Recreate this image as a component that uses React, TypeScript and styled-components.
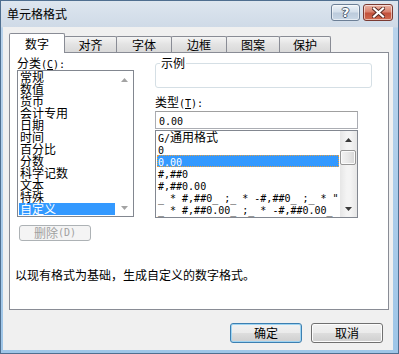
import React from "react";
import styled, { createGlobalStyle } from "styled-components";

const CJK = `"Noto Sans CJK SC", "Noto Sans", sans-serif`;
const MONO = `"DejaVu Sans Mono", "Liberation Mono", monospace`;

const GlobalStyle = createGlobalStyle`
  html, body { margin: 0; padding: 0; }
  body { width: 399px; height: 354px; overflow: hidden; background: #ffffff; }
`;

const Window = styled.div`
  width: 399px;
  height: 354px;
  box-sizing: border-box;
  display: flex;
  flex-direction: column;
  border: 1px solid #4f6f90;
  background: linear-gradient(#dde6ef 0px, #cfdae7 26px, #b9d3ec 27px, #9fc6e8 100%);
  font-family: ${CJK};
  font-size: 12px;
  line-height: 12px;
  color: #000;
`;

const TitleBar = styled.div`
  height: 26px;
  flex: none;
  display: flex;
  align-items: flex-start;
  padding: 0 5px 0 6px;
  box-sizing: border-box;
`;

const TitleText = styled.div`
  margin-top: 7px;
  flex: 1;
`;

const CaptionButton = styled.div<{ $close?: boolean }>`
  margin-top: 3px;
  width: ${(p) => (p.$close ? 30 : 29)}px;
  height: 17px;
  box-sizing: border-box;
  border: 1px solid ${(p) => (p.$close ? "#7a3a32" : "#6c7f96")};
  border-radius: 3px;
  margin-left: ${(p) => (p.$close ? 3 : 0)}px;
  display: flex;
  align-items: center;
  justify-content: center;
  background: ${(p) =>
    p.$close
      ? "linear-gradient(#eab4a6 0%, #d9826e 45%, #c3513b 55%, #cf6a4f 100%)"
      : "linear-gradient(#eef3f8 0%, #d4dfeb 45%, #bccbdc 55%, #c9d7e6 100%)"};
  box-shadow: inset 0 0 0 1px rgba(255, 255, 255, 0.55);
`;

const HelpGlyph = styled.span`
  font-family: "DejaVu Sans", sans-serif;
  font-weight: bold;
  font-size: 13px;
  line-height: 13px;
  color: #ffffff;
  text-shadow: 1px 0 0 #4a5a6e, -1px 0 0 #4a5a6e, 0 1px 0 #4a5a6e, 0 -1px 0 #4a5a6e;
`;

const Client = styled.div`
  flex: 1;
  margin: 0 5px 3px 2px;
  background: #f0f0f0;
  display: flex;
  flex-direction: column;
  padding: 6px 0 0 6px;
  box-sizing: border-box;
`;

const TabRow = styled.div`
  display: flex;
  align-items: flex-end;
  height: 20px;
  position: relative;
  z-index: 1;
`;

const Tab = styled.div<{ $w: number; $active?: boolean }>`
  width: ${(p) => p.$w}px;
  height: ${(p) => (p.$active ? 20 : 16)}px;
  margin-bottom: ${(p) => (p.$active ? 0 : 1)}px;
  box-sizing: border-box;
  border: 1px solid #898c95;
  border-bottom: none;
  margin-left: -1px;
  &:first-child { margin-left: 0; }
  border-radius: 2px 2px 0 0;
  background: ${(p) => (p.$active ? "#ffffff" : "linear-gradient(#f4f4f4, #e3e3e3 50%, #d9d9d9)")};
  display: flex;
  align-items: center;
  justify-content: center;
  padding-top: ${(p) => (p.$active ? 0 : 1)}px;
`;

const Panel = styled.div`
  width: 380px;
  height: 258px;
  margin-top: -1px;
  box-sizing: border-box;
  border: 1px solid #898c95;
  background: #ffffff;
  padding: 4px 0 0 5px;
  display: flex;
  flex-direction: column;
`;

const Columns = styled.div`
  display: grid;
  grid-template-columns: 117px 203px 14px;
  column-gap: 21px;
  margin-left: 2px;
  align-items: start;
`;

const LeftCol = styled.div`
  display: flex;
  flex-direction: column;
`;

const RightCol = styled.div`
  display: flex;
  flex-direction: column;
  grid-column: 2 / span 2;
`;

const FieldLabel = styled.div<{ $h?: number; $mt?: number }>`
  height: ${(p) => p.$h ?? 12}px;
  margin-top: ${(p) => p.$mt ?? 0}px;
  line-height: 12px;
  white-space: pre;
`;

const Mono = styled.span`
  font-family: ${MONO};
  font-size: 10px;
`;

const ListBox = styled.div<{ $h: number }>`
  height: ${(p) => p.$h}px;
  box-sizing: border-box;
  border: 1px solid #828790;
  display: flex;
  background: #ffffff;
`;

const Items = styled.div`
  flex: 1;
  min-width: 0;
  padding: 0 1px;
  overflow: hidden;
`;

const Item = styled.div<{ $selected?: boolean }>`
  height: 12px;
  line-height: 12px;
  padding-left: 1px;
  white-space: pre;
  box-sizing: border-box;
  background: ${(p) => (p.$selected ? "#3399ff" : "transparent")};
  color: ${(p) => (p.$selected ? "#ffffff" : "#000000")};
`;

const FocusItem = styled(Item)`
  outline: 1px dotted #e8a040;
  outline-offset: -1px;
`;

const ScrollBar = styled.div<{ $track?: boolean }>`
  width: 17px;
  flex: none;
  display: flex;
  flex-direction: column;
  background: ${(p) => (p.$track ? "linear-gradient(90deg, #e6e6e6, #f4f4f4 40%, #f4f4f4 60%, #e6e6e6)" : "#ffffff")};
`;

const ArrowCell = styled.div`
  height: 17px;
  flex: none;
  display: flex;
  align-items: center;
  justify-content: center;
`;

const Thumb = styled.div`
  height: 15px;
  margin: 2px 1px 0 0;
  box-sizing: border-box;
  border: 1px solid #979797;
  border-radius: 2px;
  background: linear-gradient(90deg, #f3f3f3, #e8e8e8 50%, #d6d6d6);
  box-shadow: inset 0 0 0 1px #fbfbfb;
`;

const Spacer = styled.div`
  flex: 1;
`;

const SmallButton = styled.div`
  margin-top: 8px;
  margin-left: 2px;
  width: 72px;
  height: 16px;
  box-sizing: border-box;
  border: 1px solid #adb2b5;
  border-radius: 3px;
  background: #f4f4f4;
  color: #a0a0a0;
  display: flex;
  align-items: center;
  justify-content: center;
  line-height: 12px;
`;

const GroupBox = styled.div`
  position: relative;
  margin-top: 6px;
  height: 25px;
  width: 217px;
  box-sizing: border-box;
  border: 1px solid #d5dfe5;
  border-radius: 3px;
`;

const Legend = styled.span`
  position: absolute;
  left: 4px;
  top: -7px;
  padding: 0 1px;
  background: #ffffff;
  line-height: 12px;
`;

const TextBox = styled.div`
  margin-top: 3px;
  height: 18px;
  width: 203px;
  box-sizing: border-box;
  border: 1px solid #abadb3;
  border-top-color: #a0a0a0;
  padding: 2px 0 0 3px;
  line-height: 12px;
`;

const TypeListWrap = styled.div`
  margin-top: 1px;
  width: 203px;
`;

const Description = styled.div`
  margin-top: 28px;
  line-height: 12px;
`;

const ButtonRow = styled.div`
  display: flex;
  justify-content: flex-end;
  gap: 9px;
  margin-top: 13px;
  padding-right: 10px;
`;

const DialogButton = styled.div<{ $default?: boolean }>`
  width: 72px;
  height: 20px;
  box-sizing: border-box;
  border: 1px solid ${(p) => (p.$default ? "#3c7fb1" : "#707070")};
  border-radius: 3px;
  background: linear-gradient(#f2f2f2 0%, #ebebeb 48%, #dddddd 52%, #cfcfcf 100%);
  box-shadow: inset 0 0 0 1px ${(p) => (p.$default ? "#9ed4f2" : "#fcfcfc")};
  display: flex;
  align-items: center;
  justify-content: center;
  line-height: 12px;
`;

function Arrow({ down, dim }: { down?: boolean; dim?: boolean }) {
  const c = dim ? "#a3a3a3" : "#3a3a3a";
  return (
    <svg width="7" height="4" viewBox="0 0 7 4">
      <polygon points={down ? "0,0 7,0 3.5,4" : "3.5,0 7,4 0,4"} fill={c} />
    </svg>
  );
}

function CloseGlyph() {
  return (
    <svg width="13" height="11" viewBox="0 0 13 11">
      <path d="M2 1.5 L11 9.5 M11 1.5 L2 9.5" stroke="#5a2a22" strokeWidth="4" strokeLinecap="square" />
      <path d="M2 1.5 L11 9.5 M11 1.5 L2 9.5" stroke="#ffffff" strokeWidth="2.2" strokeLinecap="square" />
    </svg>
  );
}

function Mixed({ text }: { text: string }) {
  const parts = text.split(/([\x20-\x7e]+)/).filter((s) => s.length > 0);
  return (
    <>
      {parts.map((p, i) =>
        /^[\x20-\x7e]+$/.test(p) ? <Mono key={i}>{p}</Mono> : <React.Fragment key={i}>{p}</React.Fragment>
      )}
    </>
  );
}

const tabs = [
  { label: "数字", w: 56, active: true },
  { label: "对齐", w: 53 },
  { label: "字体", w: 56 },
  { label: "边框", w: 56 },
  { label: "图案", w: 54 },
  { label: "保护", w: 52 },
];

const categories = ["常规", "数值", "货币", "会计专用", "日期", "时间", "百分比", "分数", "科学记数", "文本", "特殊", "自定义"];

const types = [
  "G/通用格式",
  "0",
  "0.00",
  "#,##0",
  "#,##0.00",
  '_ * #,##0_ ;_ * -#,##0_ ;_ * "',
  "_ * #,##0.00_ ;_ * -#,##0.00_",
];

export default function App() {
  return (
    <>
      <GlobalStyle />
      <Window>
        <TitleBar>
          <TitleText>单元格格式</TitleText>
          <CaptionButton>
            <HelpGlyph>?</HelpGlyph>
          </CaptionButton>
          <CaptionButton $close>
            <CloseGlyph />
          </CaptionButton>
        </TitleBar>
        <Client>
          <TabRow>
            {tabs.map((t) => (
              <Tab key={t.label} $w={t.w} $active={t.active}>
                {t.label}
              </Tab>
            ))}
          </TabRow>
          <Panel>
            <Columns>
              <LeftCol>
                <FieldLabel $h={13}>
                  分类<Mono>(<u>C</u>):</Mono>
                </FieldLabel>
                <ListBox $h={147}>
                  <Items>
                    {categories.map((c, i) => (
                      <Item key={c} $selected={i === categories.length - 1}>
                        {c}
                      </Item>
                    ))}
                  </Items>
                  <ScrollBar>
                    <ArrowCell>
                      <Arrow dim />
                    </ArrowCell>
                    <Spacer />
                    <ArrowCell>
                      <Arrow down dim />
                    </ArrowCell>
                  </ScrollBar>
                </ListBox>
                <SmallButton>
                  删除<Mono>(D)</Mono>
                </SmallButton>
              </LeftCol>
              <RightCol>
                <GroupBox>
                  <Legend>示例</Legend>
                </GroupBox>
                <FieldLabel $mt={8}>
                  类型<Mono>(<u>T</u>):</Mono>
                </FieldLabel>
                <TextBox>
                  <Mono>0.00</Mono>
                </TextBox>
                <TypeListWrap>
                  <ListBox $h={88}>
                    <Items>
                      {types.map((t, i) =>
                        i === 2 ? (
                          <FocusItem key={t} $selected>
                            <Mixed text={t} />
                          </FocusItem>
                        ) : (
                          <Item key={t}>
                            <Mixed text={t} />
                          </Item>
                        )
                      )}
                    </Items>
                    <ScrollBar $track>
                      <ArrowCell>
                        <Arrow />
                      </ArrowCell>
                      <Thumb />
                      <Spacer />
                      <ArrowCell>
                        <Arrow down />
                      </ArrowCell>
                    </ScrollBar>
                  </ListBox>
                </TypeListWrap>
              </RightCol>
            </Columns>
            <Description>以现有格式为基础，生成自定义的数字格式。</Description>
          </Panel>
          <ButtonRow>
            <DialogButton $default>确定</DialogButton>
            <DialogButton>取消</DialogButton>
          </ButtonRow>
        </Client>
      </Window>
    </>
  );
}
